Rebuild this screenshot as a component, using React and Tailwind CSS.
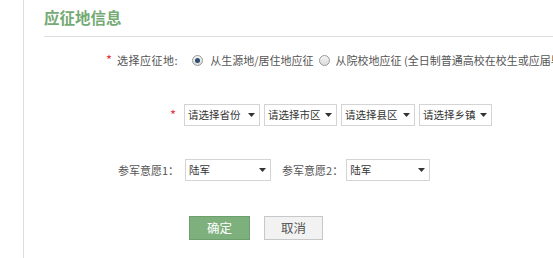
import React from 'react'

const font = { fontFamily: '"Microsoft YaHei", "Noto Sans CJK SC", "Liberation Sans", sans-serif' }

const Caret = () => (
  <svg width="7" height="4" viewBox="0 0 7 4" className="shrink-0">
    <path d="M0 0 L7 0 L3.5 4 Z" fill="#333" />
  </svg>
)

const FakeSelect = ({ label, w }) => (
  <div className={`flex items-center justify-between h-[22px] border border-[#d4d4d4] bg-white pl-[3px] pr-[4px] text-[10.5px] text-[#333] whitespace-nowrap ${w}`}>
    <span>{label}</span>
    <Caret />
  </div>
)

const Radio = ({ checked }) => (
  <span className="flex items-center justify-center w-[11px] h-[11px] rounded-full border border-[#9a9a9a] bg-gradient-to-b from-[#f4f4f4] to-[#dcdcdc] shrink-0">
    {checked && <span className="w-[5px] h-[5px] rounded-full bg-[#2c4f6e]" />}
  </span>
)

const App = () => {
  return (
    <div className="w-[553px] h-[258px] bg-white overflow-hidden relative" style={font}>
      <div className="ml-[23px] h-full border-l border-[#dcdcdc] pl-[20px]">
        <div className="pt-[6px] pb-[8px] border-b border-[#dedede] text-[15.5px] font-bold text-[#74aa74] leading-[22px]">
          应征地信息
        </div>

        <div className="flex items-center mt-[15px] text-[11px] text-[#555] whitespace-nowrap leading-[16px]">
          <span className="ml-[62px] text-[13px] text-[#e23b3b] mr-[5px]">*</span>
          <span className="tracking-[0.5px]">选择应征地:</span>
          <span className="ml-[14px] mr-[7px]"><Radio checked /></span>
          <span>从生源地/居住地应征</span>
          <span className="ml-[6px] mr-[5px]"><Radio /></span>
          <span>从院校地应征 (全日制普通高校在校生或应届毕业生)</span>
        </div>

        <div className="flex items-center mt-[36px]">
          <span className="ml-[126px] mr-[8px] text-[13px] text-[#e23b3b]">*</span>
          <div className="flex gap-[4px]">
            <FakeSelect label="请选择省份" w="w-[76px]" />
            <FakeSelect label="请选择市区" w="w-[73px]" />
            <FakeSelect label="请选择县区" w="w-[74px]" />
            <FakeSelect label="请选择乡镇" w="w-[73px]" />
          </div>
        </div>

        <div className="flex items-center mt-[33px] text-[11px] text-[#555] whitespace-nowrap">
          <span className="ml-[74px] mr-[6px]">参军意愿1：</span>
          <FakeSelect label="陆军" w="w-[86px]" />
          <span className="ml-[11px] mr-[3px]">参军意愿2：</span>
          <FakeSelect label="陆军" w="w-[84px]" />
        </div>

        <div className="flex items-center mt-[35px] ml-[145px] gap-[14px] text-[12.5px]">
          <button className="w-[61px] h-[24px] bg-[#7eb07e] border border-[#6d9f6d] text-white">确定</button>
          <button className="w-[59px] h-[24px] bg-[#f2f2f2] border border-[#c8c8c8] text-[#555]">取消</button>
        </div>
      </div>
    </div>
  )
}

export default App
